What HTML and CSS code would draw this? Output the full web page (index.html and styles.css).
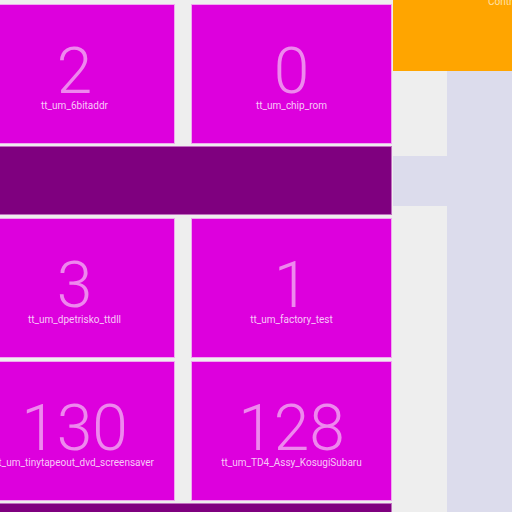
FILE: index.html
```html
<!DOCTYPE html>
<html>
<head>
<meta charset="utf-8">
<link rel="stylesheet" href="styles.css">
</head>
<body>
<div class="page">
  <div class="main">
    <div class="row first">
      <div class="tile"><div class="num">2</div><div class="lbl">tt_um_6bitaddr</div></div>
      <div class="tile"><div class="num">0</div><div class="lbl">tt_um_chip_rom</div></div>
    </div>
    <div class="bar"></div>
    <div class="row second">
      <div class="tile"><div class="num">3</div><div class="lbl">tt_um_dpetrisko_ttdll</div></div>
      <div class="tile"><div class="num">1</div><div class="lbl">tt_um_factory_test</div></div>
    </div>
    <div class="row third">
      <div class="tile"><div class="num">130</div><div class="lbl">tt_um_tinytapeout_dvd_screensaver</div></div>
      <div class="tile"><div class="num">128</div><div class="lbl">tt_um_TD4_Assy_KosugiSubaru</div></div>
    </div>
    <div class="bar last"></div>
  </div>
  <div class="side">
    <div class="orange"><div class="olbl">Contributors</div></div>
    <div class="col upper"></div>
    <div class="col lower"></div>
  </div>
</div>
</body>
</html>
```

FILE: styles.css
```css
html, body {
  margin: 0;
  padding: 0;
}
body {
  width: 512px;
  height: 512px;
  overflow: hidden;
  background: #dcdcec;
  font-family: Roboto, "Liberation Sans", sans-serif;
}
.page {
  display: flex;
  align-items: flex-start;
  height: 512px;
  overflow: hidden;
}
.main {
  width: 419px;
  margin-left: -26px;
  height: 512px;
  overflow: hidden;
  background: #eeeeee;
  display: flex;
  flex-direction: column;
  flex-shrink: 0;
}
.row {
  display: flex;
  gap: 16px;
  flex-shrink: 0;
}
.row.first { margin-top: 4px; }
.row.second { margin-top: 3px; }
.row.third { margin-top: 3px; }
.tile {
  width: 201px;
  height: 140px;
  box-sizing: border-box;
  background: #dd00dd;
  border: 1px solid #f0a8f0;
  padding-top: 39px;
  text-align: center;
  white-space: nowrap;
  display: flex;
  flex-direction: column;
  align-items: center;
  flex-shrink: 0;
}
.num {
  font-size: 64px;
  font-weight: 300;
  line-height: 56px;
  color: #ee88ee;
}
.lbl {
  font-size: 10px;
  line-height: 12px;
  color: #f8c8f8;
}
.bar {
  margin-top: 2px;
  width: 418px;
  height: 69px;
  box-sizing: border-box;
  background: #7f007f;
  border: 1px solid #c070c0;
  flex-shrink: 0;
}
.bar.last {
  margin-top: 2px;
}
.side {
  width: 119px;
  display: flex;
  flex-direction: column;
  flex-shrink: 0;
}
.orange {
  height: 71px;
  background: #ffa500;
  padding-left: 95px;
  box-sizing: border-box;
  overflow: hidden;
  white-space: nowrap;
}
.olbl {
  margin-top: -4px;
  font-size: 10px;
  line-height: 12px;
  color: #ffe2a8;
}
.col {
  width: 54px;
  background: #eeeeee;
}
.col.upper { height: 85px; }
.col.lower { height: 306px; margin-top: 50px; }
```
